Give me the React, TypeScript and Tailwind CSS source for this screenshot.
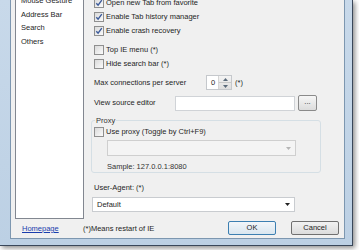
import React from "react";

function Check({ checked = false, label }: { checked?: boolean; label: string }) {
  return (
    <div className="flex items-center h-[14px] gap-[2px]">
      <span className="w-[10px] h-[10px] border border-[#8f8f8f] bg-gradient-to-br from-[#dadada] to-[#fbfbfb] flex items-center justify-center shrink-0">
        {checked && (
          <svg width="8" height="8" viewBox="0 0 8 8">
            <path d="M1.3 4.2 L3.1 6.2 L6.8 1.2" fill="none" stroke="#3b5a9a" strokeWidth="1.4" />
          </svg>
        )}
      </span>
      <span className="whitespace-nowrap">{label}</span>
    </div>
  );
}

function Arrow({ color = "#000", up = false }: { color?: string; up?: boolean }) {
  return (
    <svg width="5" height="3" viewBox="0 0 5 3">
      <path d={up ? "M0 3 L2.5 0 L5 3 Z" : "M0 0 L5 0 L2.5 3 Z"} fill={color} />
    </svg>
  );
}

export default function App() {
  const items = ["Mouse Gesture", "Address Bar", "Search", "Others"];
  return (
    <div className="w-[359px] h-[250px] bg-white overflow-hidden text-[7.5px] text-[#1e1e1e]" style={{ fontFamily: '"Liberation Sans", Arial, sans-serif' }}>
      <div className="w-[353px] h-[246px] bg-gradient-to-b from-[#c8d9ea] to-[#bcd0e4] border-r border-b border-[#39475a] pl-[10px] pr-[7px] pb-[6px] shadow-[2px_2px_5px_rgba(0,0,0,0.45)]">
        <div className="h-full bg-[#f0f0f0] border-l border-r border-b border-[#7d97b0] flex flex-col overflow-hidden">
          <div className="flex flex-1 pl-[4px]">
            {/* left list */}
            <div className="w-[69px] h-[219px] bg-white border-l border-r border-b border-[#828790] overflow-hidden">
              <div className="mt-[-6px] pl-[5px]">
                {items.map((t) => (
                  <div key={t} className="h-[13.5px] leading-[13.5px] whitespace-nowrap">{t}</div>
                ))}
              </div>
            </div>

            {/* right panel */}
            <div className="ml-[10px] mt-[-4px] flex flex-col w-[230px]">
              <Check checked label="Open new Tab from favorite" />
              <Check checked label="Enable Tab history manager" />
              <Check checked label="Enable crash recovery" />
              <div className="h-[5px]" />
              <Check label="Top IE menu (*)" />
              <Check label="Hide search bar (*)" />

              <div className="flex items-center mt-[4px] h-[15px]">
                <span className="w-[112px] whitespace-nowrap">Max connections per server</span>
                <div className="flex h-[15px] bg-white border border-[#c5c8cc]">
                  <span className="w-[11px] pl-[4px] leading-[13px]">0</span>
                  <div className="w-[13px] flex flex-col border-l border-[#d5d5d5] bg-gradient-to-b from-[#f4f4f4] to-[#dedede]">
                    <div className="flex-1 flex items-center justify-center border-b border-[#c8c8c8]"><Arrow up color="#5a6a7a" /></div>
                    <div className="flex-1 flex items-center justify-center"><Arrow color="#5a6a7a" /></div>
                  </div>
                </div>
                <span className="ml-[3px]">(*)</span>
              </div>

              <div className="flex items-center mt-[5px] h-[16px]">
                <span className="w-[81px] whitespace-nowrap">View source editor</span>
                <div className="w-[120px] h-[15px] bg-white border border-[#d0d3d7]" />
                <div className="ml-[3px] w-[19px] h-[16px] rounded-[2px] border border-[#8a8a8a] bg-gradient-to-b from-[#f6f6f6] to-[#dcdcdc] flex items-center justify-center leading-none pb-[3px]">...</div>
              </div>

              <div className="relative mt-[9px] ml-[-3px] w-[230px] h-[53px] border border-[#d5dfe5] rounded-[3px] pl-[15px] pt-[4px]">
                <span className="absolute left-[3px] top-[-5px] bg-[#f0f0f0] px-[1px] leading-[9px] text-[#333]">Proxy</span>
                <div className="ml-[-13px]">
                  <Check label="Use proxy (Toggle by Ctrl+F9)" />
                </div>
                <div className="mt-[1px] w-[189px] h-[16px] bg-[#f4f4f4] border border-[#cfcfcf] flex items-center justify-end pr-[4px]">
                  <Arrow color="#b5b5b5" />
                </div>
                <div className="mt-[5px] whitespace-nowrap text-[#333]">Sample: 127.0.0.1:8080</div>
              </div>

              <div className="mt-[10px] h-[10px] leading-[10px]">User-Agent: (*)</div>
              <div className="mt-[4px] ml-[-2px] w-[203px] h-[15px] bg-white border border-[#c9ccd0] flex items-center justify-between pl-[4px] pr-[4px]">
                <span>Default</span>
                <Arrow color="#222" />
              </div>
            </div>
          </div>

          {/* footer */}
          <div className="h-[20px] flex items-center pl-[11px] pr-[5px]">
            <span className="text-[#1a3dad] underline w-[61px]">Homepage</span>
            <span className="whitespace-nowrap">(*)Means restart of IE</span>
            <div className="ml-auto flex gap-[15px] mt-[-1px]">
              <div className="w-[48px] h-[14px] rounded-[2px] border border-[#3c7fb1] bg-gradient-to-b from-[#f2f6fa] to-[#d9e6ef] flex items-center justify-center">OK</div>
              <div className="w-[48px] h-[14px] rounded-[2px] border border-[#707070] bg-gradient-to-b from-[#f2f2f2] to-[#dcdcdc] flex items-center justify-center">Cancel</div>
            </div>
          </div>
        </div>
      </div>
    </div>
  );
}
